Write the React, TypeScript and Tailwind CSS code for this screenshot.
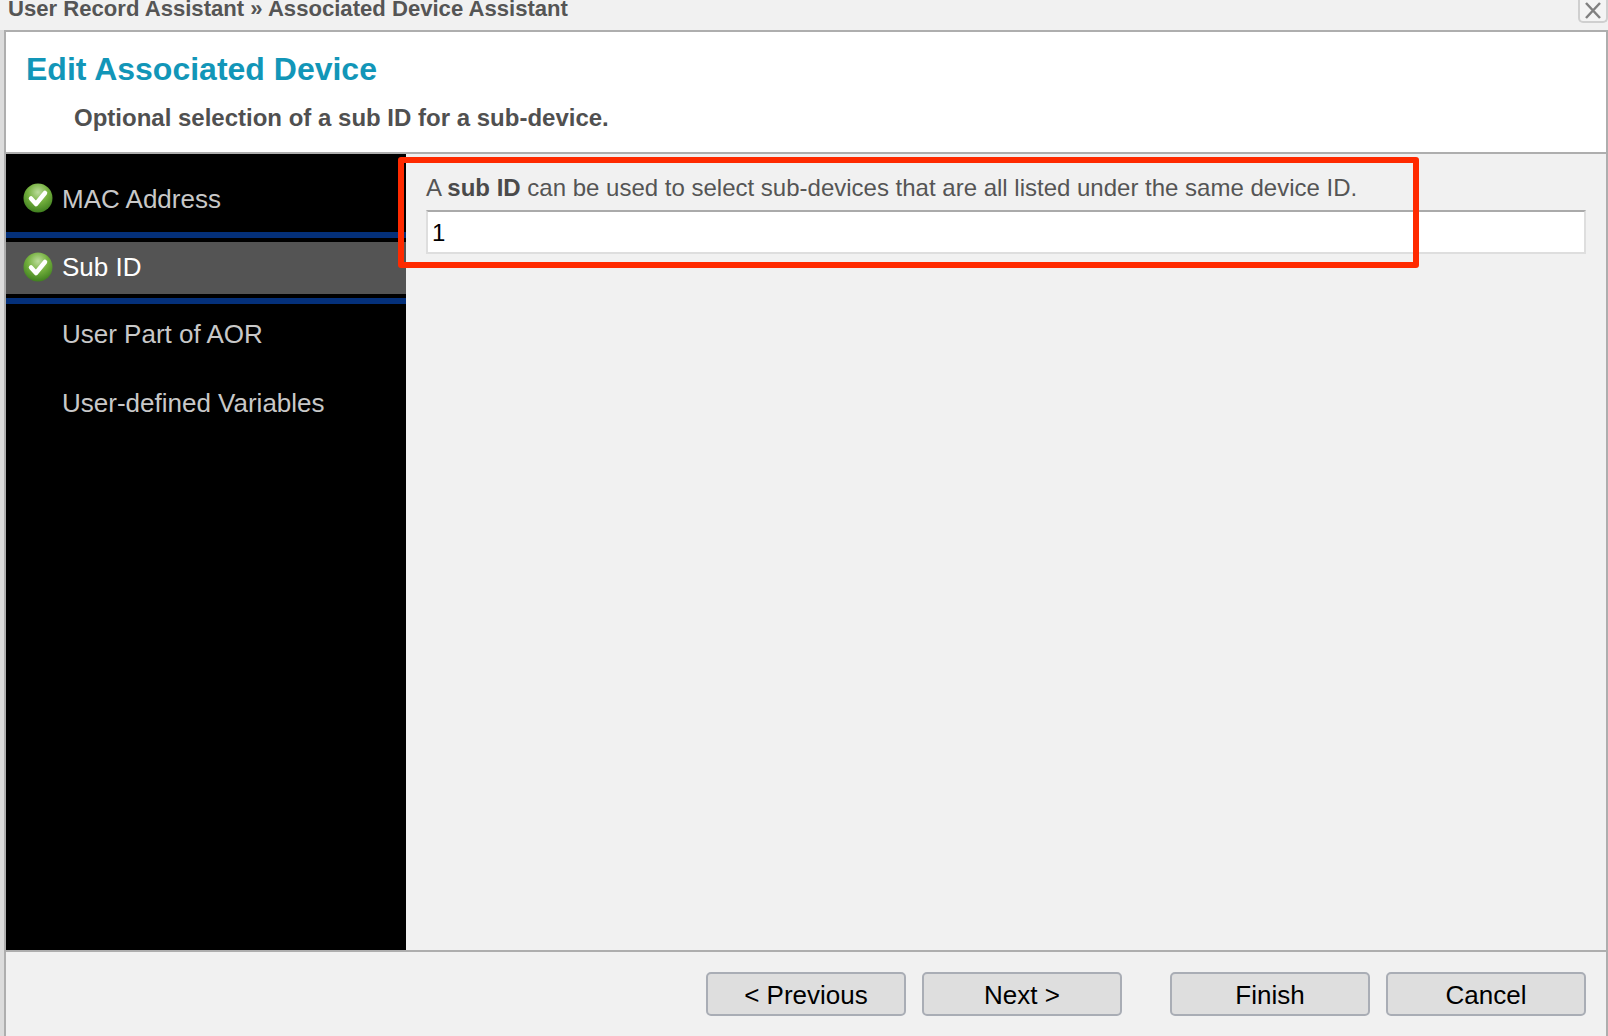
function CheckIcon({ className = "" }: { className?: string }) {
    return (
        <svg width="30" height="30" viewBox="0 0 30 30" className={`shrink-0 ${className}`}>
            <defs>
                <radialGradient id="okGreen" cx="50%" cy="30%" r="70%">
                    <stop offset="0%" stopColor="#bcdc9c" />
                    <stop offset="50%" stopColor="#74b03e" />
                    <stop offset="100%" stopColor="#3f7f1f" />
                </radialGradient>
            </defs>
            <circle cx="15" cy="15" r="14.5" fill="url(#okGreen)" />
            <path d="M8 15.5l5 5.5 9-11" fill="none" stroke="#fff" strokeWidth="4.5" strokeLinecap="round" strokeLinejoin="round" />
        </svg>
    );
}

function Button({ label, className = "" }: { label: string; className?: string }) {
    return (
        <button className={`w-[200px] h-[44px] pt-[1px] bg-[#dedede] border-2 border-[#a9adb5] rounded-[5px] text-[26px] leading-[38px] text-black ${className}`}>
            {label}
        </button>
    );
}

function App() {
    return (
        <div className="w-[1608px] h-[1036px] overflow-hidden flex flex-col bg-[#f1f1f1] font-['Liberation_Sans',sans-serif]">
            {/* Title bar */}
            <div className="h-[30px] shrink-0 flex justify-between items-start">
                <div className="pl-[8px] mt-[-6px] text-[22.1px] leading-[30px] font-bold text-[#555]">
                    User Record Assistant » Associated Device Assistant
                </div>
                <div className="w-[30px] h-[23px] border-2 border-t-0 border-[#cfcfcf] rounded-b-[5px] bg-[#f4f4f4] flex items-center justify-center">
                    <svg width="18" height="18" viewBox="0 0 18 18">
                        <path d="M2 1l14 15M16 1L2 16" stroke="#808080" strokeWidth="2.5" />
                    </svg>
                </div>
            </div>

            {/* Dialog */}
            <div className="flex-1 flex flex-col min-h-0 border-l-4 border-[#dcdcdc]">
                <div className="flex-1 flex flex-col relative border-l-2 border-r-2 border-t-2 border-[#aeaeae] min-h-0">
                    {/* Header */}
                    <div className="h-[120px] shrink-0 bg-white pl-[20px] pt-[18px]">
                        <h1 className="text-[32px] leading-[38px] font-bold text-[#1296b8]">Edit Associated Device</h1>
                        <p className="mt-[15px] pl-[48px] text-[24px] leading-[30px] font-bold text-[#505050]">
                            Optional selection of a sub ID for a sub-device.
                        </p>
                    </div>
                    <div className="h-[2px] shrink-0 bg-[#aeaeae]"></div>

                    <div className="h-[796px] shrink-0 flex">
                        {/* Steps */}
                        <div className="w-[400px] shrink-0 bg-black text-[26px] text-[#c8c8c8]">
                            <div className="h-[78px] pt-[10px] pl-[17px] flex items-center gap-[9px]">
                                <CheckIcon />
                                <span className="mt-[3px]">MAC Address</span>
                            </div>
                            <div className="h-[6px] bg-[#04307a]"></div>
                            <div className="h-[52px] mt-[4px] bg-[#545454] pl-[17px] flex items-center gap-[9px] text-white">
                                <CheckIcon className="mb-[2px]" />
                                <span className="mb-[1px]">Sub ID</span>
                            </div>
                            <div className="h-[6px] mt-[4px] bg-[#04307a]"></div>
                            <div className="h-[61px] pl-[56px] flex items-center">User Part of AOR</div>
                            <div className="h-[76px] pl-[56px] flex items-center">User-defined Variables</div>
                        </div>

                        {/* Content */}
                        <div className="flex-1 pl-[20px] pr-[20px] pt-[18px]">
                            <p className="text-[24px] leading-[32px] text-[#555]">
                                A <b className="text-[#4a4a4a]">sub ID</b> can be used to select sub-devices that are all listed under the same device ID.
                            </p>
                            <div className="mt-[6px] h-[44px] bg-white border-2 border-[#dedede] border-t-[#aaaaaa] pl-[4px] text-[24px] leading-[42px] text-black">
                                1
                            </div>
                        </div>
                    </div>

                    {/* Footer */}
                    <div className="flex-1 border-t-2 border-[#aeaeae] pt-[20px] pr-[20px] flex justify-end">
                        <Button label="< Previous" />
                        <Button label="Next >" className="ml-[16px]" />
                        <Button label="Finish" className="ml-[48px]" />
                        <Button label="Cancel" className="ml-[16px]" />
                    </div>

                    {/* Red annotation */}
                    <div className="absolute left-[392px] top-[125px] w-[1021px] h-[111px] border-[6px] border-[#ff2a00] rounded-[3px] pointer-events-none"></div>
                </div>
            </div>
        </div>
    );
}

export default App;
